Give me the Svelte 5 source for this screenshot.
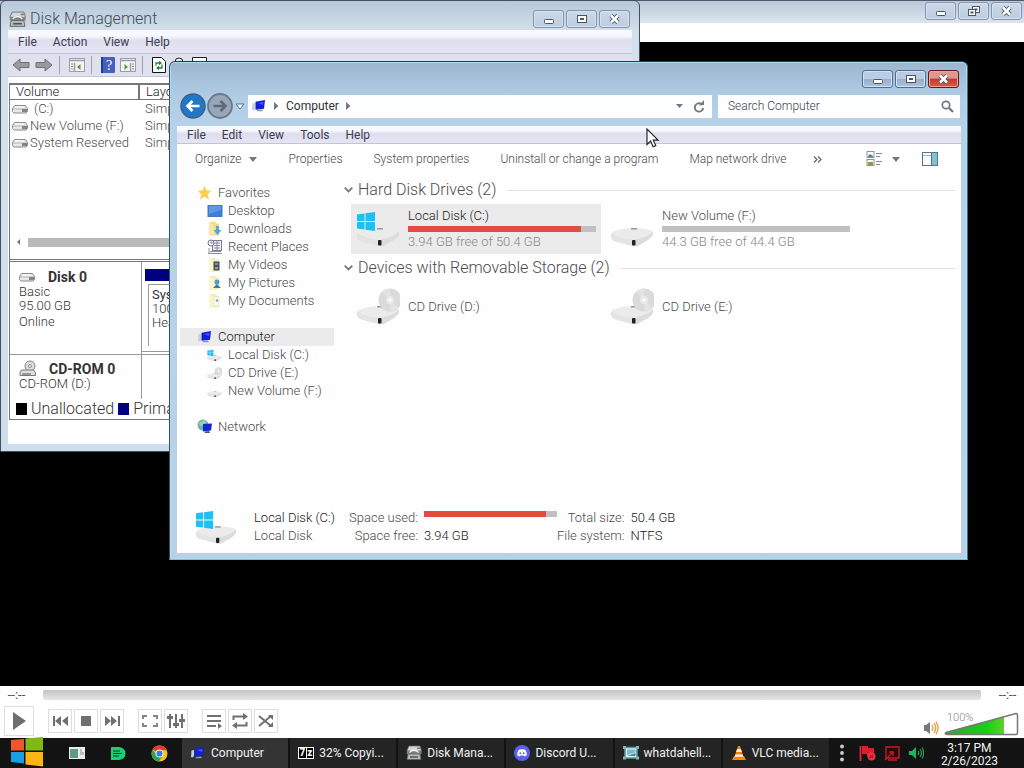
<script>
  const favorites = [
    ['desktop', 'Desktop'],
    ['downloads', 'Downloads'],
    ['recent', 'Recent Places'],
    ['videos', 'My Videos'],
    ['pictures', 'My Pictures'],
    ['documents', 'My Documents']
  ];
  const drives = [
    ['windrive', 'Local Disk (C:)'],
    ['cddrive', 'CD Drive (E:)'],
    ['drive', 'New Volume (F:)']
  ];
  const volumes = ['(C:)', 'New Volume (F:)', 'System Reserved'];
  const groups = [
    {
      title: 'Hard Disk Drives (2)',
      items: [
        { icon: 'windrive', name: 'Local Disk (C:)', used: 92, free: '3.94 GB free of 50.4 GB', selected: true },
        { icon: 'drive', name: 'New Volume (F:)', used: 0, free: '44.3 GB free of 44.4 GB' }
      ]
    },
    {
      title: 'Devices with Removable Storage (2)',
      items: [
        { icon: 'cddrive', name: 'CD Drive (D:)' },
        { icon: 'cddrive', name: 'CD Drive (E:)' }
      ]
    }
  ];
  const tasks = [
    ['computer', 'Computer'],
    ['zip', '32% Copyi...'],
    ['diskmgmt', 'Disk Mana...'],
    ['discord', 'Discord U...'],
    ['picture', 'whatdahell...'],
    ['vlc', 'VLC media...']
  ];
  let search = $state('');
</script>

{#snippet winButtons(middle, danger)}
  <div class="winbtns" class:danger>
    <button aria-label="Minimize"><svg width="29" height="16" viewBox="0 0 29 16"><rect x="10.500" y="8.500" width="9" height="4" rx="1" fill="#fff" stroke="#4c5468" /></svg></button>
    <button aria-label={middle}>
      <svg width="29" height="16" viewBox="0 0 29 16" fill="#fff" stroke="#4c5468">
        {#if middle === 'Restore'}
          <rect x="13.500" y="3.500" width="7" height="6" /><rect x="16" y="6" width="2" height="1" />
          <rect x="9.500" y="6.500" width="7" height="6" /><rect x="12" y="9" width="2" height="1" />
        {:else}
          <rect x="10.500" y="4.500" width="9" height="7" /><rect x="13.500" y="7.500" width="3" height="1" />
        {/if}
      </svg>
    </button>
    <button class="close" aria-label="Close">
      <svg width="29" height="16" viewBox="0 0 29 16"><path d="M11 4.500l7 7m0-7l-7 7" stroke="#4c5468" stroke-width="4.500" /><path d="M11 4.500l7 7m0-7l-7 7" stroke="#fff" stroke-width="2.500" /></svg>
    </button>
  </div>
{/snippet}

{#snippet hdd()}
  <svg width="16" height="10" viewBox="0 0 16 10"><path d="M2.500 1.500h11l2 3v3l-1.500 1.500h-12l-1.500-1.500v-3z" fill="#e8e8e8" stroke="#8a8a8a" /><path d="M1 5h14" stroke="#b5b5b5" /><rect x="10" y="5" width="5" height="3" fill="#858585" /><path d="M3 3h9" stroke="#fff" /></svg>
{/snippet}

{#snippet icon(name, size)}
  <svg class="icon" width={size} height={size} viewBox="0 0 16 16" aria-hidden="true">
    {#if name === 'star'}
      <path d="M7.500 1l1.900 4.600 4.800.5-3.600 3.200 1.100 4.900-4.200-2.600-4.200 2.600 1.100-4.900L1 6.100l4.600-.5z" fill="#fbcf4b" stroke="#f3dc88" stroke-width=".6" />
    {:else if name === 'desktop'}
      <rect x="1" y="2.500" width="14" height="11" fill="#3f7fd8" stroke="#4878bd" /><path d="M2 3h12v4L2 11z" fill="#5e98e6" />
    {:else if name === 'recent'}
      <rect x="5.500" y="1.500" width="9" height="10" fill="#eef0f4" stroke="#7c8292" /><path d="M7 4h6M7 6.500h6M7 9h6M10 2v9" stroke="#8b90a4" /><circle cx="4" cy="4" r="3" fill="#f6f6fa" stroke="#70758a" /><path d="M4 2.500V4h1.500" stroke="#555" fill="none" stroke-width=".8" /><path d="M1 14.500h14M3 12.500h11M2 9v5" stroke="#8d919c" />
    {:else if name === 'downloads' || name === 'videos' || name === 'pictures' || name === 'documents'}
      <path d="M2 1.500l6-1 1 2h3v12H2z" fill={name === 'downloads' ? '#f6d98a' : '#f4edb4'} /><path d="M2 1.500l5 2V15l-5-1z" fill={name === 'downloads' ? '#fbe6a6' : '#faf5cf'} />
      {#if name === 'downloads'}<path d="M9 5h3v4h2.500l-4 5-4-5H9z" fill="#56a5dc" />
      {:else if name === 'videos'}<rect x="6.500" y="4.500" width="6" height="9" fill="#47515c" /><path d="M8 6h3v2H8z" fill="#7694c0" /><path d="M8 10h3v2H8z" fill="#9fae62" />
      {:else if name === 'pictures'}<circle cx="10" cy="7" r="2.500" fill="#4c9ccc" /><path d="M6 13l4-4 4 4z" fill="#3a78b8" />
      {:else}<path d="M7 4h5v9H7z" fill="#fbfbee" stroke="#dfdcbb" stroke-width=".6" /><circle cx="10" cy="7.500" r="1.200" fill="#76a8a4" />{/if}
    {:else if name === 'computer'}
      <path d="M4.500 3.700L14 2l-1 8.700-8.500 1z" fill="#1420d8" /><path d="M7 5l5.500-1-.6 3z" fill="#4456f4" /><path d="M6 12l5-.5 1 1.700H5.500z" fill="#8c97b5" /><path d="M1.500 5.500L4 5v6l-1.500 1.500-1.500-.5z" fill="#c6cedc" />
    {:else if name === 'network'}
      <circle cx="6" cy="6" r="5.500" fill="#69b0b3" /><path d="M2 4l5-3 3 2-3 3-4 1z" fill="#9cd2a4" /><path d="M6 5l9-.5-1 7-8 1z" fill="#1226ce" /><path d="M8 12.500l4-.4 1 1.900H7.500z" fill="#37508a" />
    {:else if name === 'diskmgmt'}
      <path d="M3 1h11l1.500 5H.8z" fill="#d5d8d8" stroke="#666a6d" stroke-width=".8" /><path d="M.8 6h14.700v3H.8z" fill="#7d8285" /><path d="M2 9h12l1 5.500H1z" fill="#b7bbbb" stroke="#5b5f62" stroke-width=".8" /><path d="M3.500 7.500c2-3 7-3 9 0" fill="none" stroke="#fff" stroke-width="1.300" /><path d="M4 12h8" stroke="#4d5357" stroke-width="1.500" /><rect x="11" y="2.500" width="3" height="1.500" fill="#717d73" />
    {:else if name === 'discord'}
      <circle cx="8" cy="8" r="8" fill="#5b63ea" /><path d="M4.300 5.200Q6 4.200 8 4.400q2 -.2 3.700.8Q13 8 12.800 10.300q-1.200 1-2.600 1.100l-.6-1q-1.600.4-3.200 0l-.6 1q-1.400-.1-2.600-1.100Q3 8 4.300 5.200z" fill="#fff" /><circle cx="6.300" cy="8.200" r="1" fill="#5b63ea" /><circle cx="9.700" cy="8.200" r="1" fill="#5b63ea" />
    {:else if name === 'picture'}
      <rect x="2" y="2.500" width="12" height="10.500" fill="#e6f5f5" stroke="#5b9298" stroke-width="1.600" /><path d="M4 4.500h8.500v3L4 10z" fill="#7bb9dc" /><path d="M4 11l8.500-3v3z" fill="#4c8a7a" /><path d="M0 1h3v3H0zM13 1h3v3h-3zM0 11.500h3v3H0zM13 11.500h3v3h-3z" fill="#86b5b8" />
    {:else if name === 'vlc'}
      <path d="M3 11h10l2 4H1z" fill="#f08a18" /><path d="M7 1h2l3.500 11Q8 14.500 3.500 12z" fill="#ee8212" /><path d="M6.100 4h3.800l1 3H5.100zM4.400 9.500h7.200l.7 2.200H3.700z" fill="#f8efe2" />
    {:else if name === 'chrome'}
      <circle cx="8" cy="8" r="7.500" fill="#fbc116" /><path d="M8 8L1.500 4.250A7.500 7.500 0 0 1 14.500 4.250L14.500 5H8z" fill="#e33b2e" /><path d="M1.500 4.250A7.500 7.500 0 0 0 7.500 15.500L11 10 5 9.500z" fill="#30a14e" /><circle cx="8" cy="8" r="3.700" fill="#fff" /><circle cx="8" cy="8" r="2.900" fill="#3b7de8" />
    {/if}
  </svg>
{/snippet}

{#snippet bigDrive(name, w)}
  <svg class="bigdrive" width={w} viewBox="0 0 44 38" aria-hidden="true">
    <path d="M1 24l22-5 20 3q1 4-5 8l-10 6q-4 1-7-.5L4 31Q0 28 1 24z" fill="#dcdcdc" />
    <path d="M1 23q6-4 20-5 15 0 22 3-2 5-19 9Q8 29 1 23z" fill="#ebebeb" />
    <path d="M1 24q8 5 21 6v6L4 31Q0 28 1 24z" fill="#e4e4e4" />
    <path d="M21 18h6v1.500h-6z" fill="#999" />
    <rect x="22" y="30" width="3.500" height="5.500" rx="1" fill="#222" />
    {#if name === 'windrive'}
      <path d="M1 4.500l7.500-1V11H1zM9.500 3.300L19 2v9H9.500zM1 12h7.500v7.500L1 18.500zM9.500 12H19v9l-9.500-1.300z" fill="#1cc0f2" />
    {:else if name === 'cddrive'}
      <circle cx="34" cy="12" r="11.500" fill="#dadada" /><path d="M34 12L26 4a11.500 11.500 0 0 1 8-3.500zM34 12l8 8a11.500 11.500 0 0 1-8 3.500z" fill="#e3e3e3" /><circle cx="34" cy="12" r="4" fill="#e9e9e9" /><circle cx="34" cy="12" r="1.700" fill="#fff" />
    {/if}
  </svg>
{/snippet}

<div class="screen">
  <section class="player" aria-label="VLC media player">
    <header class="player-title">{@render winButtons('Restore', false)}</header>
    <div class="player-menu"></div>
    <div class="video"></div>
    <footer class="controls">
      <div class="seek-row"><span>--:--</span><input type="range" aria-label="Position" min="0" max="100" value="0" /><span>--:--</span></div>
      <div class="button-row">
        <button class="play" aria-label="Play"><svg width="28" height="28" viewBox="0 0 28 28"><path d="M8 5l13 9-13 9z" fill="#6f6f6f" /></svg></button>
        <div class="set">
          <button aria-label="Previous"><svg viewBox="0 0 22 22"><path d="M4 6v10h2v-10zM12 6v10l-6-5zM19 6v10l-6-5z" /></svg></button>
          <button aria-label="Stop"><svg viewBox="0 0 22 22"><path d="M6 6h10v10H6z" /></svg></button>
          <button aria-label="Next"><svg viewBox="0 0 22 22"><path d="M4 6v10l6-5zM10 6v10l6-5zM17 6v10h2V6z" /></svg></button>
        </div>
        <div class="set">
          <button aria-label="Fullscreen"><svg viewBox="0 0 22 22"><path d="M4 9V6h4M14 6h4v3M18 13v3h-4M8 16H4v-3" fill="none" stroke="#858585" stroke-width="2" /></svg></button>
          <button aria-label="Equalizer"><svg viewBox="0 0 22 22"><path d="M5 4v14M11 4v14M17 4v14" stroke="#707070" stroke-width="2" /><path d="M2 6h6v3H2zM8 13h6v3H8zM14 9h6v3h-6z" /></svg></button>
        </div>
        <div class="set">
          <button aria-label="Playlist"><svg viewBox="0 0 22 22"><path d="M4 5h14v2H4zM4 10h14v2H4zM4 15h9v2H4zM15 13l4 3-4 3z" /></svg></button>
          <button aria-label="Loop"><svg viewBox="0 0 22 22"><path d="M4.500 10V6.500H16M17.500 12v3.500H6" fill="none" stroke="#707070" stroke-width="2" /><path d="M14 3l5 3.500-5 3.500zM8 12l-5 3.500L8 19z" /></svg></button>
          <button aria-label="Shuffle"><svg viewBox="0 0 22 22"><path d="M4 6l12 10M4 16L16 6" fill="none" stroke="#707070" stroke-width="2" /><path d="M13 5h5v5zM18 12v5h-5z" /></svg></button>
        </div>
        <div class="volume">
          <svg width="16" height="16" viewBox="0 0 16 16"><path d="M1 5h2l4-3v12l-4-3H1z" fill="#777" /><path d="M9 5q2 3 0 6M11 3q3.500 5 0 10M13 1.500q4 6.500 0 13" fill="none" stroke="#ee9a35" stroke-width="1.300" /></svg>
          <div class="wedge">
            <svg width="75" height="24" viewBox="0 0 75 24"><defs><linearGradient id="vol"><stop offset="0" stop-color="#3aa03a" /><stop offset=".7" stop-color="#16d016" /><stop offset="1" stop-color="#5fd02c" /></linearGradient></defs><path d="M2 20L60 5v17H2z" fill="url(#vol)" /><path d="M2 20.500L72 1.500q1.500 0 1.500 1.500v18q0 1.500-1.500 1.500H3q-3-.5-1-2z" fill="none" stroke="#777" stroke-width="1.500" /></svg>
            <span>100%</span>
          </div>
        </div>
      </div>
    </footer>
  </section>

  <section class="window disk" aria-label="Disk Management">
    <header class="disk-title">{@render icon('diskmgmt', 17)}<h1>Disk Management</h1>{@render winButtons('Maximize', false)}</header>
    <div class="disk-body">
      <nav class="menu tall"><button>File</button><button>Action</button><button>View</button><button>Help</button></nav>
      <div class="disk-tools">
        <button aria-label="Back"><svg width="18" height="16" viewBox="0 0 18 16"><path d="M1 8l7-6v3.500h9v5H8V14z" fill="#9a9a9e" stroke="#707076" /></svg></button>
        <button aria-label="Forward"><svg width="18" height="16" viewBox="0 0 18 16"><path d="M17 8l-7-6v3.500H1v5h9V14z" fill="#9a9a9e" stroke="#707076" /></svg></button>
        <i></i>
        <button aria-label="Show console tree"><svg width="16" height="14" viewBox="0 0 16 14"><rect x=".5" y=".5" width="15" height="13" fill="#f5f5ee" stroke="#989db0" /><path d="M1 2.500h14M5.500 5v8" stroke="#989db0" stroke-width="1.500" /><path d="M2 6h2M2 8.500h2M2 11h2" stroke="#888" /><path d="M11.500 6v6l-3.500-3z" fill="#56984a" /></svg></button>
        <i></i>
        <button aria-label="Help"><svg width="14" height="16" viewBox="0 0 14 16"><rect width="14" height="16" rx="1" fill="#4560bd" /><path d="M0 0h2v16H0z" fill="#243d93" /><text x="8" y="13" text-anchor="middle" fill="#fff" font-size="14" font-family="Liberation Serif, serif">?</text></svg></button>
        <button aria-label="Show action pane"><svg width="16" height="14" viewBox="0 0 16 14"><rect x=".5" y=".5" width="15" height="13" fill="#f5f5ee" stroke="#989db0" /><path d="M1 2.500h14M10.500 5v8" stroke="#989db0" stroke-width="1.500" /><path d="M12 6h2M12 8.500h2M12 11h2" stroke="#888" /><path d="M4.500 6v6L8 9z" fill="#56984a" /></svg></button>
        <i></i>
        <button aria-label="Refresh"><svg width="14" height="16" viewBox="0 0 14 16"><path d="M.5.500h9l4 4v11H.5z" fill="#fff" stroke="#111" /><path d="M4 8.500V6h4M10 7.500V11H6" fill="none" stroke="#23813a" stroke-width="1.300" /><path d="M7 3.800l3 2.200-3 2.200zM7 8.800L4 11l3 2.200z" fill="#23813a" /></svg></button>
        <button aria-label="Properties"><svg width="16" height="16" viewBox="0 0 16 16"><circle cx="8" cy="5" r="4" fill="#eee" stroke="#222" /></svg></button>
        <button aria-label="List"><svg width="16" height="16" viewBox="0 0 16 16"><path d="M.5.500h14v15H.5z" fill="#fff" stroke="#222" /></svg></button>
      </div>
      <div class="panes">
        <table>
          <thead><tr><th>Volume</th><th>Layout</th></tr></thead>
          <tbody>{#each volumes as v, i}<tr><td><span class="vol" class:first={i === 0}>{@render hdd()}{v}</span></td><td>Simple</td></tr>{/each}</tbody>
        </table>
        <div class="hscroll"><span></span><b></b></div>
        <div class="diskrow">
          <div class="label"><strong>{@render hdd()}Disk 0</strong><span>Basic</span><span>95.00 GB</span><span class="low">Online</span></div>
          <div class="parts"><div class="stripe"></div><div class="part"><b>System</b><span>100 MB</span><span>Healthy</span></div></div>
        </div>
        <div class="diskrow cd">
          <div class="label"><strong><svg width="18" height="18" viewBox="0 0 18 18"><circle cx="11" cy="6" r="5" fill="#ddd" stroke="#888" /><circle cx="11" cy="6" r="1.500" fill="#fff" stroke="#888" /><path d="M2.500 10h12l2 2.500v3H1v-3z" fill="#ddd" stroke="#777" /><path d="M3 14h9" stroke="#555" /></svg>CD-ROM 0</strong><span>CD-ROM (D:)</span></div>
        </div>
        <div class="legend"><i></i>Unallocated<i class="primary"></i>Primary partition</div>
      </div>
    </div>
  </section>

  <section class="window explorer" aria-label="Computer">
    <header class="exp-title">{@render winButtons('Maximize', true)}</header>
    <div class="navrow">
      <button aria-label="Back"><svg width="26" height="26" viewBox="0 0 26 26"><circle cx="13" cy="13" r="12" fill="#2277c9" stroke="#3d5f88" stroke-width="1.500" /><path d="M19.500 13H8M12.500 8l-5 5 5 5" fill="none" stroke="#fff" stroke-width="2.600" /></svg></button>
      <button aria-label="Forward"><svg width="26" height="26" viewBox="0 0 26 26"><circle cx="13" cy="13" r="12" fill="#98a6b9" stroke="#6c7889" stroke-width="1.800" /><path d="M6.500 13H18M13.500 8l5 5-5 5" fill="none" stroke="#5f6876" stroke-width="2.600" /></svg></button>
      <button class="recent" aria-label="Recent pages"><svg width="10" height="7" viewBox="0 0 10 7"><path d="M1 1h8L5 6z" fill="#fff" stroke="#50739b" /></svg></button>
      <div class="address">
        {@render icon('computer', 16)}
        <svg width="5" height="8" viewBox="0 0 5 8"><path d="M0 0l4.500 4L0 8z" fill="#777" /></svg>
        <button>Computer</button>
        <svg width="5" height="8" viewBox="0 0 5 8"><path d="M0 0l4.500 4L0 8z" fill="#777" /></svg>
        <button class="end" aria-label="Previous locations"><svg width="7" height="4" viewBox="0 0 7 4"><path d="M0 0h7L3.500 4z" fill="#777" /></svg></button>
        <button aria-label="Refresh"><svg width="12" height="13" viewBox="0 0 12 13"><path d="M8.500 4A4.200 4.200 0 1 0 10.200 8" fill="none" stroke="#777" stroke-width="1.900" /><path d="M6 5.500L11 5V0z" fill="#777" /></svg></button>
      </div>
      <label class="search"><input placeholder="Search Computer" aria-label="Search Computer" bind:value={search} /><svg width="13" height="13" viewBox="0 0 13 13"><circle cx="5" cy="5" r="3.700" fill="none" stroke="#707580" stroke-width="1.700" /><path d="M8 8l4 4" stroke="#707580" stroke-width="2.300" /></svg></label>
    </div>
    <div class="exp-body">
      <nav class="menu"><button>File</button><button>Edit</button><button>View</button><button>Tools</button><button>Help</button></nav>
      <div class="toolbar">
        <button>Organize <svg width="8" height="5" viewBox="0 0 8 5"><path d="M0 0h8L4 5z" fill="#777" /></svg></button>
        <button>Properties</button><button>System properties</button><button>Uninstall or change a program</button><button>Map network drive</button>
        <button class="more" aria-label="More commands"><svg width="9" height="7" viewBox="0 0 9 7"><path d="M1 .5l3 3-3 3M5 .5l3 3-3 3" fill="none" stroke="#666" stroke-width="1.200" /></svg></button>
        <button class="end" aria-label="Change view"><svg width="17" height="16" viewBox="0 0 17 16"><rect x="1" y=".5" width="7" height="6" fill="#fff" stroke="#8a95a5" /><path d="M2 5l2-2 3 2v1H2z" fill="#5d7a9a" /><rect x="1" y="8.500" width="7" height="6" fill="#fff" stroke="#8a9a70" /><path d="M2 11h5v3H2z" fill="#869a52" /><path d="M10 2.500h6M10 5.500h4M10 10.500h6M10 13.500h4" stroke="#8a8a8a" /></svg><svg width="8" height="5" viewBox="0 0 8 5"><path d="M0 0h8L4 5z" fill="#777" /></svg></button>
        <button aria-label="Preview pane"><svg width="16" height="14" viewBox="0 0 16 14"><rect x=".5" y=".5" width="15" height="13" fill="#fbfdff" stroke="#587487" /><path d="M1 3.500h9" stroke="#9cb2c0" /><rect x="10" y="1" width="5" height="12" fill="#7dc3d3" /><path d="M9.500 1v12" stroke="#587487" /></svg></button>
      </div>
      <div class="middle">
        <aside>
          <a href="#favorites">{@render icon('star', 16)}Favorites</a>
          {#each favorites as [ic, label]}<a class="sub" href="#{ic}">{@render icon(ic, 16)}{label}</a>{/each}
          <a class="root on" href="#computer">{@render icon('computer', 16)}Computer</a>
          {#each drives as [ic, label]}<a class="sub" href="#{ic}"><span class="mini">{@render bigDrive(ic, 15)}</span>{label}</a>{/each}
          <a class="root" href="#network">{@render icon('network', 16)}Network</a>
        </aside>
        <main>
          {#each groups as group}
            <h2><svg width="9" height="6" viewBox="0 0 9 6"><path d="M.7.700L4.500 4.500 8.300.7" fill="none" stroke="#777" stroke-width="1.800" /></svg>{group.title}<span></span></h2>
            <div class="items">
              {#each group.items as item}
                <button class="item" class:selected={item.selected}>
                  {@render bigDrive(item.icon, 44)}
                  <span class="info">
                    <span>{item.name}</span>
                    {#if item.free}<span class="bar"><span style="width: {item.used}%"></span></span><span class="free">{item.free}</span>{/if}
                  </span>
                </button>
              {/each}
            </div>
          {/each}
        </main>
      </div>
      <footer class="details">
        {@render bigDrive('windrive', 42)}
        <div class="who"><span class="dark">Local Disk (C:)</span><span>Local Disk</span></div>
        <dl class="one"><dt>Space used:</dt><dd><span class="bar"><span style="width: 92%"></span></span></dd><dt>Space free:</dt><dd>3.94 GB</dd></dl>
        <dl><dt>Total size:</dt><dd>50.4 GB</dd><dt>File system:</dt><dd>NTFS</dd></dl>
      </footer>
    </div>
  </section>

  <svg class="cursor" width="14" height="21" viewBox="0 0 14 21"><path d="M1 1v15.500l3.600-3.400 2.500 5.700 2.700-1.200-2.500-5.400H12z" fill="#fff" stroke="#222636" stroke-width="1.200" /></svg>

  <div class="taskbar">
    <button class="start" aria-label="Start"><svg width="33" height="30" viewBox="0 0 33 30"><path d="M1 3l13-1v11.500H1z" fill="#f0562b" /><path d="M15.500 1.500L33 0v13.500H15.500z" fill="#7fba14" /><path d="M1 15h13v11.500L1 25z" fill="#1b9fe4" /><path d="M15.500 15H33v14.500l-17.500-2z" fill="#fbb616" /></svg></button>
    <div class="pins">
      <button aria-label="Window manager"><svg width="16" height="12" viewBox="0 0 16 12"><rect width="16" height="12" fill="#e9ece9" /><rect x="1" y="2" width="8" height="9" fill="#5f9a86" /><path d="M11 2h4v6h-4z" fill="#b8bcbb" /><path d="M13 2h2v3h-2z" fill="#f7f7f7" /></svg></button>
      <button aria-label="Notes"><svg width="16" height="15" viewBox="0 0 16 15"><path d="M2 1h7q6.500 1 6.500 6.500T9 14H1V2q0-1 1-1z" fill="#1bd071" /><path d="M3 5h7M3 7.500h9M3 10h6" stroke="#0c3a24" stroke-width="1.200" /></svg></button>
      <button aria-label="Chrome">{@render icon('chrome', 17)}</button>
    </div>
    <div class="tasks">{#each tasks as [ic, label], i}<button class:active={i === 0}>{#if ic === 'zip'}<span class="zip"><b>7</b><b>z</b></span>{:else}{@render icon(ic, 16)}{/if}{label}</button>{/each}</div>
    <div class="tray">
      <svg width="4" height="18" viewBox="0 0 4 18" fill="#ccc"><circle cx="2" cy="2.500" r="1.900" /><circle cx="2" cy="9" r="1.900" /><circle cx="2" cy="15.500" r="1.900" /></svg>
      <svg width="17" height="16" viewBox="0 0 17 16"><path d="M1.500 1v15" stroke="#e22a35" stroke-width="1.800" /><path d="M3 1h6v2h6v8H8V9H3z" fill="#d81f2d" /><circle cx="12.500" cy="11.500" r="4" fill="#e83340" /><path d="M11 10l3 3m0-3l-3 3" stroke="#500" /></svg>
      <svg width="16" height="15" viewBox="0 0 16 15"><path d="M2 1h13v11H2z" fill="#2b0508" stroke="#c21c2a" stroke-width="1.400" /><path d="M1 14l8-8M5 6h4v4M4 14h9" stroke="#c21c2a" stroke-width="1.400" fill="none" /></svg>
      <svg width="16" height="14" viewBox="0 0 16 14"><path d="M1 5h3l4-4v12L4 9H1z" fill="#19b565" /><path d="M10 5q1.500 2 0 4M12 3q3 4 0 8M14 1.500q3.500 5.500 0 11" fill="none" stroke="#19a55d" stroke-width="1.200" /></svg>
      <time><span>3:17 PM</span><span>2/26/2023</span></time>
    </div>
  </div>
</div>

<style>
  :global(body) { background: #000; }
  .screen {
    position: relative; display: flex; flex-direction: column; min-height: 100vh; overflow: hidden;
    font: 300 13px/18px Roboto, "Liberation Sans", sans-serif; color: #4c4c4c;
  }
  .screen * { box-sizing: border-box; }
  button { font: inherit; color: inherit; background: none; border: 0; padding: 0; margin: 0; }
  svg { display: block; flex: none; }

  .player { flex: 1; display: flex; flex-direction: column; }
  .player-title { height: 23px; padding: 1px 2px 0; display: flex; justify-content: flex-end; background: linear-gradient(#b9c9d8, #dbe5ee); border-top: 1px solid #50586c; }
  .player-menu { height: 19px; background: #fff; }
  .video { flex: 1; background: #000; }
  .controls { background: #fefefe; height: 52px; }
  .seek-row { display: flex; align-items: center; height: 18px; padding: 0 6px; gap: 16px; }
  .seek-row span { width: 21px; text-align: center; font-weight: 400; }
  .seek-row input { flex: 1; appearance: none; margin: 0; height: 10px; border-radius: 2px; background: linear-gradient(#c4c4c4, #e6e6e6); }
  .seek-row input::-webkit-slider-thumb { appearance: none; width: 0; height: 0; }
  .button-row { display: flex; align-items: center; gap: 14px; padding: 2px 5px 0 4px; }
  .button-row button { border: 1px solid #dedede; background: #fff; }
  .set { display: flex; gap: 2px; }
  .set button { width: 24px; height: 24px; }
  .set svg { width: 22px; height: 22px; fill: #707070; }
  .volume { margin-left: auto; display: flex; gap: 5px; align-items: flex-end; padding-top: 5px; }
  .wedge { position: relative; }
  .wedge span { position: absolute; left: 3px; top: 0; font-size: 11px; line-height: 12px; color: #888; }

  .winbtns { display: flex; gap: 2px; margin-left: auto; }
  .winbtns button { width: 31px; height: 18px; border: 1px solid #8593b0; border-radius: 3px; background: linear-gradient(#cbd9e7, #bccde0); box-shadow: inset 0 0 0 1px #d5e1ee; }
  .danger button { border-color: #566b90; background: linear-gradient(#b8cde5 50%, #95afcd 50%, #a9c3df); }
  .danger .close { border-color: #5a1c1c; background: linear-gradient(#e0988e 45%, #c5382b 50%, #d85d48); box-shadow: inset 0 0 0 1px #e8a79f; }

  .window { position: absolute; display: flex; flex-direction: column; border: 1px solid #454e60; border-radius: 6px 6px 0 0; }
  .disk { inset: 0 384px 316px 0; padding: 0 7px 7px; background: linear-gradient(#b7c8d7, #d4e1ec 32px, #cfdeec); }
  .disk-title { display: flex; align-items: center; gap: 4px; height: 29px; padding: 7px 2px 0 1px; }
  .disk-title h1 { font: inherit; font-size: 16px; line-height: 18px; margin: 0; color: #414b5b; }
  .disk-body { flex: 1; display: flex; flex-direction: column; min-height: 0; background: #fff; }
  .menu { display: flex; align-items: center; gap: 16px; height: 18px; padding: 0 10px; font-size: 12px; font-weight: 400; color: #3c3c52; background: linear-gradient(#f8f9fe 25%, #dedfee 45%, #e4e4f2); border-bottom: 1px solid #c3c5d6; }
  .menu.tall { height: 24px; }
  .disk-tools { display: flex; align-items: center; gap: 5px; height: 23px; padding: 0 4px; background: #e0e1ef; border-bottom: 1px solid #c3c5d6; }
  .disk-tools i { width: 1px; height: 18px; background: #9fa1b2; margin: 0 4px 0 1px; }
  .panes { flex: 1; display: flex; flex-direction: column; margin: 6px 1px 24px; border: 1px solid #777; border-top-width: 2px; overflow: hidden; }
  table { border-collapse: collapse; table-layout: fixed; width: 100%; }
  th { font-weight: inherit; text-align: left; height: 14px; line-height: 14px; padding: 0 6px; border-right: 2px solid #777; border-bottom: 1px solid #777; color: #222; }
  th:first-child { width: 129px; }
  td { height: 17px; line-height: 17px; padding: 0 6px; }
  td:first-child { padding: 0 2px; white-space: nowrap; }
  .vol { display: flex; align-items: center; gap: 2px; }
  .first { gap: 6px; }
  .hscroll { margin-top: auto; display: flex; gap: 8px; align-items: center; height: 30px; padding: 0 0 4px 7px; }
  .hscroll span { border: 3px solid transparent; border-right-color: #777; border-left: 0; }
  .hscroll b { flex: 1; height: 9px; background: #b9b9b9; }
  .diskrow { display: flex; height: 95px; border-top: 3px double #777; line-height: 14px; color: #333; }
  .diskrow .label { width: 132px; border-right: 1px solid #999; padding: 7px 9px; display: flex; flex-direction: column; }
  .diskrow strong { display: flex; align-items: center; gap: 13px; font-size: 14px; line-height: 18px; font-weight: 700; height: 16px; }
  .low { padding-top: 2px; }
  .parts { flex: 1; margin: 7px 0 2px; padding-left: 3px; border-bottom: 1px solid #999; }
  .stripe { height: 12px; background: #000080; }
  .part { margin: 3px 0 0 3px; height: 62px; border: 1px solid #999; border-bottom: 0; padding: 3px; display: flex; flex-direction: column; }
  .diskrow.cd { height: 45px; border-top: 1px solid #999; }
  .cd .label { padding-top: 6px; }
  .cd strong { gap: 12px; }
  .legend { display: flex; align-items: center; gap: 4px; height: 20px; padding-left: 6px; font-size: 16px; white-space: nowrap; color: #333; }
  .legend i { flex: none; width: 11px; height: 12px; background: #000; }
  .legend .primary { background: #000080; }

  .explorer { inset: 61px 56px 208px 169px; padding: 0 6px 6px 7px; background: linear-gradient(#9db6d0, #b1cde6 36px, #b7d2e8 70px, #bccfe6); box-shadow: inset 0 0 0 1px #a9dff0; border-color: #2c3c4c #2f7487 #6fc4dc #35506b; }
  .exp-title { display: flex; height: 32px; padding: 8px 2px 0; }
  .navrow { display: flex; align-items: center; height: 24px; margin-left: 3px; font-size: 12px; }
  .navrow > button + button { margin-left: 1px; }
  .navrow > .recent { margin: 0 3px 0 2px; }
  .address { flex: 1; display: flex; align-items: center; gap: 7px; height: 23px; padding: 0 7px 0 3px; margin-right: 6px; background: #fdfeff; color: #333; font-weight: 400; }
  .end { margin-left: auto; }
  .address .end { margin-right: 3px; }
  .search { display: flex; align-items: center; width: 31%; height: 23px; padding: 0 6px 0 10px; margin-right: 1px; background: #fdfeff; }
  .search input { flex: 1; min-width: 0; border: 0; outline: 0; padding: 0; background: none; font: inherit; color: #444; }
  .search input::placeholder { color: #444; }
  .exp-body { flex: 1; display: flex; flex-direction: column; min-height: 0; margin-top: 8px; background: #fefefe; }
  .toolbar { display: flex; align-items: center; gap: 31px; height: 30px; padding: 0 23px 0 18px; white-space: nowrap; font-size: 12px; }
  .toolbar button { display: flex; align-items: center; gap: 8px; }
  .toolbar .more { margin-left: -4px; }
  .toolbar .end { gap: 9px; margin-left: auto; margin-right: -9px; }
  .middle { flex: 1; display: flex; }
  aside { width: 158px; padding: 10px 0 0 3px; }
  aside a { display: flex; align-items: center; gap: 5px; height: 18px; padding-left: 17px; color: inherit; text-decoration: none; white-space: nowrap; }
  aside .sub { padding-left: 27px; }
  aside .root { margin-top: 18px; }
  aside .on { background: #ebebeb; color: #222; margin-right: 1px; }
  .mini { width: 16px; }
  main { flex: 1; padding: 4px 6px 0 9px; }
  h2 { display: flex; align-items: center; gap: 5px; height: 26px; margin: 0; padding-bottom: 2px; font: inherit; font-size: 16px; line-height: 24px; }
  h2 span { flex: 1; height: 1px; margin-left: 6px; background: #e2e2e2; }
  .items { display: flex; gap: 4px; padding: 0 0 2px 7px; }
  .item { display: flex; align-items: center; gap: 8px; width: 250px; height: 50px; padding: 0 5px 0 5px; text-align: left; }
  .item.selected { background: #ebebeb; }
  .item.selected .info > span:first-child { color: #222; }
  .info { flex: 1; display: flex; flex-direction: column; }
  .bar { display: block; height: 6px; background: #c0c0c0; margin: 1px 0; }
  .bar span { display: block; height: 100%; background: #e64b41; }
  .free { color: #888; }
  .details { display: flex; align-items: flex-start; height: 53px; padding: 9px 18px 0; line-height: 18px; white-space: nowrap; }
  .who { display: flex; flex-direction: column; margin-left: 17px; }
  .dark, dd { color: #222; }
  dl { display: grid; grid-template-columns: auto auto; grid-template-rows: 18px 18px; column-gap: 6px; margin: 0; }
  dt { text-align: right; }
  dd { margin: 0; }
  .details .one { margin-left: 14px; }
  .details .bar { width: 133px; margin-top: 2px; }

  .cursor { position: absolute; left: 646px; top: 128px; }

  .taskbar { display: flex; height: 30px; background: #131313; color: #f2f2f2; position: relative; font-size: 12px; font-weight: 400; }
  .start { margin: -2px 0 0 10px; }
  .pins { display: flex; align-items: center; gap: 25px; padding: 0 14px 0 26px; }
  .tasks { flex: 1; display: flex; gap: 2px; }
  .tasks button { flex: 1; min-width: 0; display: flex; align-items: center; gap: 5px; padding-left: 8px; background: #242424; white-space: nowrap; overflow: hidden; }
  .tasks .active { background: #343434; }
  .zip { display: flex; flex: none; width: 16px; height: 12px; border: 1px solid #fff; background: #000; font-size: 10px; line-height: 10px; font-weight: 700; }
  .zip b { flex: 1; text-align: center; }
  .zip b + b { border-left: 1px solid #fff; }
  .tray { display: flex; align-items: center; gap: 8px; padding: 0 26px 0 11px; }
  .tray svg:first-child { margin-right: 7px; }
  time { display: flex; flex-direction: column; align-items: center; line-height: 13px; margin-left: 9px; padding-top: 3px; }
</style>
